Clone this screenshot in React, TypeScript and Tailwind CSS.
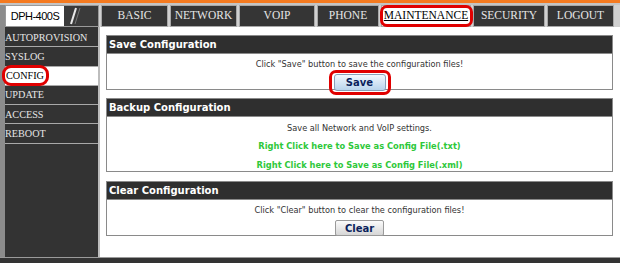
import React from "react";

const tabs = [
  { t: "BASIC", w: "w-[67px]" },
  { t: "NETWORK", w: "w-[67px]" },
  { t: "VOIP", w: "w-[76px]" },
  { t: "PHONE", w: "w-[62px]" },
  { t: "MAINTENANCE", w: "w-[90px]", hl: true },
  { t: "SECURITY", w: "w-[72px]" },
  { t: "LOGOUT", w: "w-[67px]" },
];

const side = ["AUTOPROVISION", "SYSLOG", "CONFIG", "UPDATE", "ACCESS", "REBOOT"];

function Header({ children }: { children: React.ReactNode }) {
  return (
    <div className="h-[18px] bg-[#2f2f2f] border border-[#8a8a8a] border-b-0 flex items-center pl-[2px] text-white font-bold text-[10px] font-['DejaVu_Sans',sans-serif] leading-none">
      {children}
    </div>
  );
}

export default function App() {
  return (
    <div className="w-[620px] h-[263px] overflow-hidden bg-[#dcdcdc] flex flex-col font-['Liberation_Serif',serif]">
      <div className="h-[3px] bg-[#f47a20] shrink-0" />
      <div className="h-[2px] bg-[#c4c4c4] shrink-0" />
      {/* nav row */}
      <div className="h-[22px] flex shrink-0 bg-[#d0d0d0]">
        <div className="w-[5px] bg-[#8c8c8c]" />
        <div className="w-[94px] flex bg-[#3a3a3a] border border-[#9a9a9a]">
          <div className="w-[58px] bg-white flex items-center justify-center text-[11px] text-black font-['Liberation_Sans',sans-serif] tracking-[-0.5px]">
            DPH-400S
          </div>
          <div className="flex-1 flex items-center pl-[5px]">
            <svg width="12" height="18" viewBox="0 0 12 18">
              <line x1="7" y1="1" x2="2" y2="17" stroke="#e8e8e8" strokeWidth="2" />
              <line x1="11" y1="1" x2="6" y2="17" stroke="#777" strokeWidth="1" />
            </svg>
          </div>
        </div>
        <div className="flex gap-[2px] ml-[2px]">
          {tabs.map((tb) => (
            <div
              key={tb.t}
              className={`${tb.w} relative flex items-center justify-center border border-[#a8a8a8] text-[11.5px] ${
                tb.hl ? "bg-white text-black underline" : "bg-[#353535] text-[#e6e6e6]"
              }`}
            >
              {tb.t}
              {tb.hl && (
                <div className="absolute left-[-2px] right-[-3px] top-[-1px] bottom-[-1px] border-[3px] border-[#e00000] rounded-[7px]" />
              )}
            </div>
          ))}
        </div>
      </div>
      {/* body */}
      <div className="flex flex-1 min-h-0">
        <div className="w-[5px] bg-[#8c8c8c]" />
        <div className="w-[93px] bg-[#333333] flex flex-col pt-[1px]">
          {side.map((s) => (
            <div
              key={s}
              className={`h-[19.3px] border-b border-[#a9a9a9] flex items-center text-[10.2px] ${
                s === "CONFIG" ? "bg-white text-black" : "text-[#e6e6e6]"
              }`}
            >
              {s === "CONFIG" ? (
                <span className="relative pl-[1px]">
                  {s}
                  <span className="absolute left-[-3px] right-[-5px] top-[-3px] bottom-[-3px] border-[3px] border-[#e00000] rounded-[9px]" />
                </span>
              ) : (
                s
              )}
            </div>
          ))}
        </div>
        <div className="w-[2px] bg-[#bdbdbd]" />
        <div className="flex-1 bg-white pl-[6px] pr-[7px] pt-[8px] flex flex-col font-['DejaVu_Sans',sans-serif]">
          {/* Save */}
          <Header>Save Configuration</Header>
          <div className="border border-[#8a8a8a] h-[37px] flex flex-col items-center text-[8.2px] text-[#333]">
            <div className="mt-[6px] leading-none">Click "Save" button to save the configuration files!</div>
            <div className="relative mt-[6px]">
              <div className="w-[52px] h-[17px] rounded-[3px] border border-[#8aa0b8] bg-gradient-to-b from-[#f2f8fd] to-[#b9d4ec] flex items-center justify-center text-[10px] font-bold text-[#0b1f5c]">
                Save
              </div>
              <div className="absolute left-[-5px] right-[-5px] top-[-4px] bottom-[-4px] border-[3px] border-[#e00000] rounded-[7px]" />
            </div>
          </div>
          <div className="h-[8px]" />
          {/* Backup */}
          <Header>Backup Configuration</Header>
          <div className="border border-[#8a8a8a] h-[56px] flex flex-col items-center text-[8.2px] text-[#333]">
            <div className="mt-[7px] leading-none">Save all Network and VoIP settings.</div>
            <div className="mt-[10px] leading-none font-bold text-[8.3px] text-[#2ec83a]">Right Click here to Save as Config File(.txt)</div>
            <div className="mt-[10px] leading-none font-bold text-[8.3px] text-[#2ec83a]">Right Click here to Save as Config File(.xml)</div>
          </div>
          <div className="h-[9px]" />
          {/* Clear */}
          <Header>Clear Configuration</Header>
          <div className="border border-[#8a8a8a] h-[37px] flex flex-col items-center text-[8.2px] text-[#333]">
            <div className="mt-[6px] leading-none">Click "Clear" button to clear the configuration files!</div>
            <div className="mt-[6px] w-[49px] h-[16px] rounded-[2px] border border-[#9a9a9a] bg-gradient-to-b from-[#fbfbfb] to-[#d6d6d6] flex items-center justify-center text-[10px] font-bold text-[#0b1f5c]">
              Clear
            </div>
          </div>
          <div className="flex-1" />
        </div>
      </div>
      <div className="h-[1px] bg-[#9a9a9a] shrink-0" />
      <div className="h-[5px] bg-[#333333] shrink-0" />
    </div>
  );
}
